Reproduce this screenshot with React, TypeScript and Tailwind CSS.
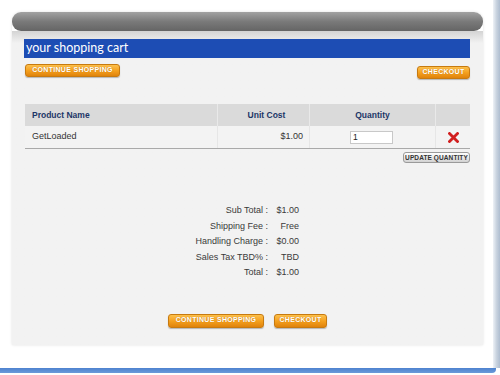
import React from 'react';

const orangeBtn =
  "flex items-center justify-center rounded-[3px] border border-[#c77a10] bg-gradient-to-b from-[#fcc04a] via-[#f5a11e] to-[#e0830a] text-white font-bold uppercase text-[7px] tracking-[0.3px] [text-shadow:0_0_1px_rgba(150,80,0,0.6)] shadow-[0_1px_1px_rgba(0,0,0,0.25)]";

const summary = [
  { label: 'Sub Total :', value: '$1.00' },
  { label: 'Shipping Fee :', value: 'Free' },
  { label: 'Handling Charge :', value: '$0.00' },
  { label: 'Sales Tax TBD% :', value: 'TBD' },
  { label: 'Total :', value: '$1.00' },
];

function RemoveIcon() {
  return (
    <svg width="11" height="11" viewBox="0 0 11 11">
      <path d="M1.5 1.5 L9.5 9.5 M9.5 1.5 L1.5 9.5" stroke="#d11f1f" strokeWidth="2.8" strokeLinecap="square" />
    </svg>
  );
}

export default function App() {
  return (
    <div className="w-[500px] h-[375px] bg-white flex flex-col overflow-hidden font-['Liberation_Sans',Arial,sans-serif]">
      <div className="flex flex-1 min-h-0">
        <div className="w-[493px] pt-[12px] pl-[12px]">
          {/* Card */}
          <div className="w-[471px] shadow-[0_0_3px_rgba(0,0,0,0.12)] rounded-t-[9px]">
            <div className="h-[19px] rounded-[9px] bg-gradient-to-b from-[#a2a2a2] via-[#7a7a7a] to-[#656565]"></div>
            <div className="h-[314px] bg-gradient-to-b from-[#d4d4d4] via-[#f2f2f2] via-[12px] to-[#f2f2f2] px-[12px] pt-[8px] flex flex-col">
              <div className="h-[19px] w-[446px] bg-[#1d4db4] flex items-center pl-[2px]">
                <span className="text-white text-[12.5px] leading-none font-['Lato',sans-serif]">your shopping cart</span>
              </div>

              <div className="flex justify-between items-start mt-[6px] w-[446px]">
                <div className={`${orangeBtn} ml-[1px] w-[95px] h-[13px]`}>Continue Shopping</div>
                <div className={`${orangeBtn} mt-[2px] w-[53px] h-[13px]`}>Checkout</div>
              </div>

              {/* Table */}
              <div className="mt-[25px] w-[445px] ml-[1px]">
                <div className="flex h-[22px] bg-[#dadada] text-[#1c3667] font-bold text-[8.5px]">
                  <div className="w-[193px] flex items-center pl-[7px] border-r border-[#e9e9e9]">Product Name</div>
                  <div className="w-[92px] flex items-center justify-center pl-[6px] border-r border-[#e9e9e9]">Unit Cost</div>
                  <div className="w-[126px] flex items-center justify-center border-r border-[#e9e9e9]">Quantity</div>
                  <div className="flex-1"></div>
                </div>
                <div className="flex h-[23px] bg-[#f3f3f3] border-b border-[#a9a9a9] text-[9px] text-[#333]">
                  <div className="w-[193px] flex items-center pl-[7px] border-r border-[#e6e6e6]">GetLoaded</div>
                  <div className="w-[92px] flex items-center justify-end pr-[6px] border-r border-[#e6e6e6]">$1.00</div>
                  <div className="w-[126px] flex items-center pl-[40px] border-r border-[#e6e6e6]">
                    <div className="w-[43px] h-[13px] bg-white border border-[#c8c8c8] flex items-center pl-[2px] text-[8.5px] text-[#222]">1</div>
                  </div>
                  <div className="flex-1 flex items-center justify-center">
                    <RemoveIcon />
                  </div>
                </div>
                <div className="flex justify-end mt-[3px]">
                  <div className="w-[67px] h-[11px] rounded-[3px] border border-[#9a9a9a] bg-gradient-to-b from-[#ffffff] to-[#d2d2d2] flex items-center justify-center text-[6.5px] font-bold text-[#333] tracking-[0.1px]">
                    UPDATE QUANTITY
                  </div>
                </div>
              </div>

              {/* Summary */}
              <div className="mt-[40px] grid grid-cols-[245px_30px] gap-x-[0px] text-[9px] text-[#3a3a3a] leading-[15.5px]">
                {summary.map(row => (
                  <React.Fragment key={row.label}>
                    <div className="text-right pr-[1px]">{row.label}</div>
                    <div className="text-right">{row.value}</div>
                  </React.Fragment>
                ))}
              </div>

              <div className="flex justify-center gap-[10px] mt-[33px]">
                <div className={`${orangeBtn} w-[96px] h-[14px]`}>Continue Shopping</div>
                <div className={`${orangeBtn} w-[53px] h-[14px]`}>Checkout</div>
              </div>
            </div>
          </div>
        </div>
        <div className="w-[7px] bg-gradient-to-r from-[#eef2f7] via-[#c9d3df] to-[#aebdd0]"></div>
      </div>
      <div className="h-[5px] bg-gradient-to-b from-[#4d82cf] to-[#6b9ad9] mb-[2px] rounded-br-[4px] w-[496px]"></div>
    </div>
  );
}
